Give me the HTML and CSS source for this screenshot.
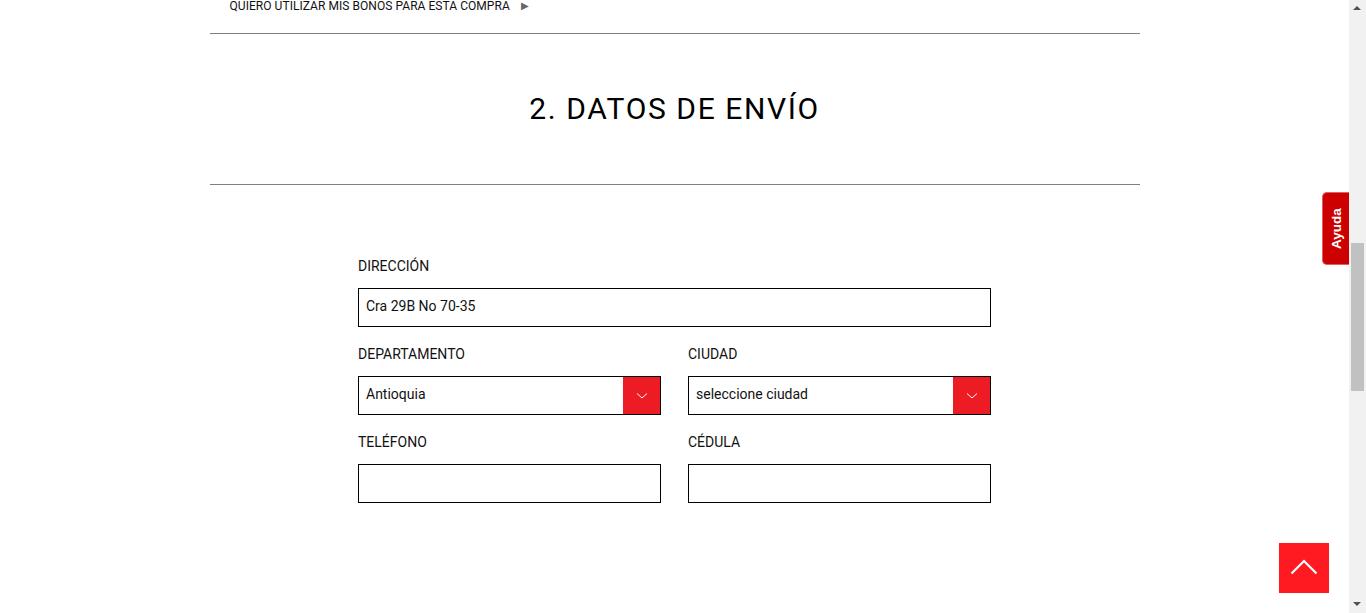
FILE: index.html
```html
<!DOCTYPE html>
<html lang="es">
<head>
<meta charset="utf-8">
<title>Datos de envío</title>
<link rel="stylesheet" href="styles.css">
</head>
<body>
<div class="page">
  <div class="wrap">
    <div class="bonos">QUIERO UTILIZAR MIS BONOS PARA ESTA COMPRA <span class="tri">&#9654;</span></div>
    <div class="rule"></div>
    <div class="head"><h2>2. DATOS DE ENVÍO</h2></div>
    <div class="rule"></div>
    <form class="form">
      <div class="field full">
        <label>DIRECCIÓN</label>
        <div class="input">Cra 29B No 70-35</div>
      </div>
      <div class="row">
        <div class="field">
          <label>DEPARTAMENTO</label>
          <div class="input select">Antioquia<span class="btn"><svg width="12" height="8" viewBox="0 0 12 8"><path d="M1 1.5 L6 6 L11 1.5" fill="none" stroke="#fff" stroke-width="1"/></svg></span></div>
        </div>
        <div class="field">
          <label>CIUDAD</label>
          <div class="input select">seleccione ciudad<span class="btn"><svg width="12" height="8" viewBox="0 0 12 8"><path d="M1 1.5 L6 6 L11 1.5" fill="none" stroke="#fff" stroke-width="1"/></svg></span></div>
        </div>
      </div>
      <div class="row">
        <div class="field">
          <label>TELÉFONO</label>
          <div class="input"></div>
        </div>
        <div class="field">
          <label>CÉDULA</label>
          <div class="input"></div>
        </div>
      </div>
    </form>
  </div>
</div>
<div class="ayuda"><span>Ayuda</span></div>
<div class="totop"><svg width="28" height="16" viewBox="0 0 28 16"><path d="M1.5 14.5 L14 2 L26.5 14.5" fill="none" stroke="#fff" stroke-width="2.2"/></svg></div>
<div class="sb">
  <div class="sb-up"></div>
  <div class="sb-thumb"></div>
  <div class="sb-down"></div>
</div>
</body>
</html>
```
FILE: styles.css
```css
html, body { margin: 0; padding: 0; overflow: hidden; background: #fff; }
body { font-family: Roboto, "Liberation Sans", sans-serif; color: #111; }
.page { width: 1349px; height: 613px; }
.wrap { width: 930px; margin: 0 auto; }
.bonos { padding: 0 0 0 20px; font-size: 12px; line-height: 12px; height: 33px; color: #111; letter-spacing: 0.05px; }
.bonos .tri { font-size: 10px; color: #666; margin-left: 8px; vertical-align: 1px; }
.rule { height: 1px; background: #808080; }
.head { height: 150px; display: flex; align-items: center; justify-content: center; }
.head h2 { margin: -2px 0 0; font-weight: 400; font-size: 30px; letter-spacing: 1.6px; color: #000; }
.form { width: 633px; margin: 71px auto 0; }
.row { display: flex; gap: 27px; }
.row .field { width: 303px; }
.field { margin-bottom: 17px; }
.field label { display: block; font-size: 14px; line-height: 20px; margin-bottom: 12px; color: #111; }
.input { box-sizing: border-box; height: 39px; border: 1px solid #000; font-size: 14px; line-height: 34px; padding-left: 7px; position: relative; color: #111; }
.select .btn { position: absolute; right: 0; top: 0; width: 37px; height: 37px; background: #ed1c24; display: flex; align-items: center; justify-content: center; }
.ayuda { position: fixed; left: 1322px; top: 192px; width: 27px; height: 73px; box-sizing: border-box; background: #cc0000; border: 1px solid #e06060; border-right: none; border-radius: 5px 0 0 5px; display: flex; align-items: center; justify-content: center; }
.ayuda span { transform: rotate(-90deg); color: #fff; font-family: "Liberation Sans", Arial, sans-serif; font-weight: 700; font-size: 13.5px; white-space: nowrap; }
.totop { position: fixed; left: 1279px; top: 543px; width: 50px; height: 50px; background: #ff1a22; display: flex; align-items: center; justify-content: center; }
.totop svg { margin-top: -2px; }
.sb { position: fixed; right: 0; top: 0; width: 17px; height: 613px; background: #f1f1f1; }
.sb-up { position: absolute; left: 4px; top: 6px; width: 0; height: 0; border-left: 4px solid transparent; border-right: 4px solid transparent; border-bottom: 4px solid #505050; }
.sb-down { position: absolute; left: 4px; top: 602px; width: 0; height: 0; border-left: 4px solid transparent; border-right: 4px solid transparent; border-top: 4px solid #505050; }
.sb-thumb { position: absolute; left: 2px; top: 243px; width: 13px; height: 148px; background: #c1c1c1; }
```
